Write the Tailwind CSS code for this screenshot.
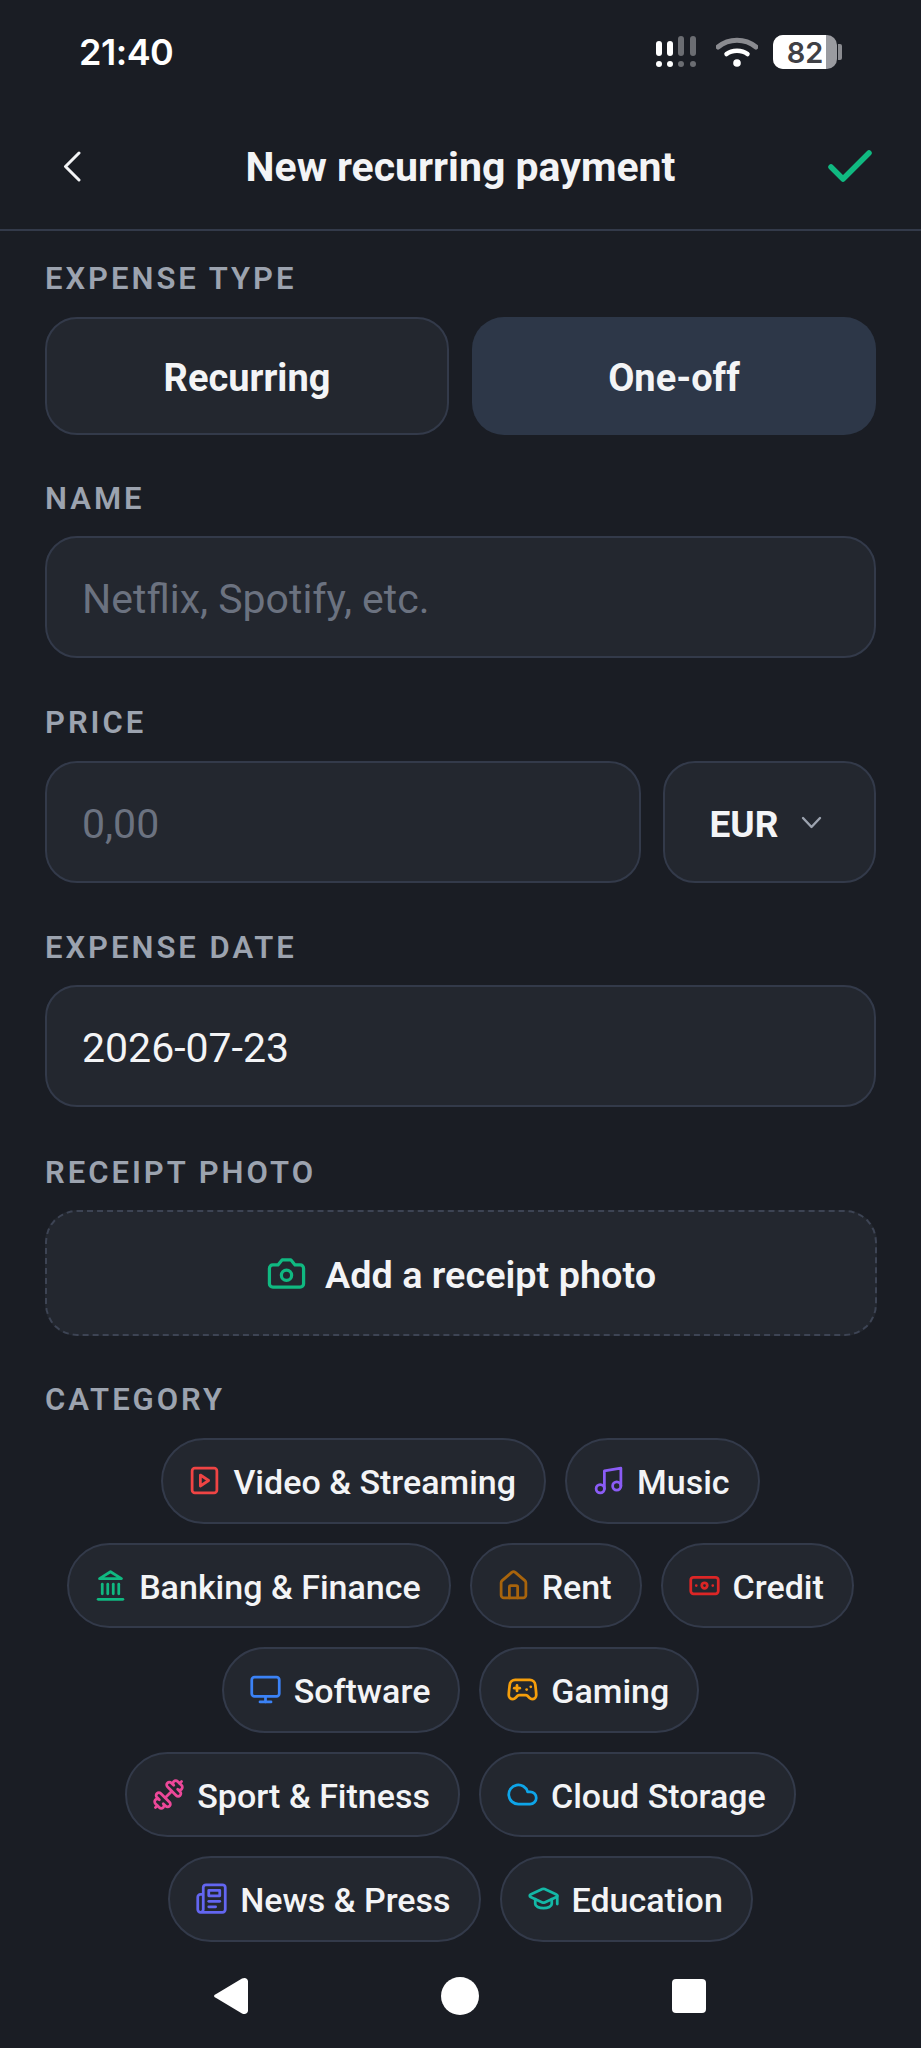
<!DOCTYPE html>
<html lang="en">
  <head>
    <meta charset="UTF-8" />
    <meta name="viewport" content="width=device-width, initial-scale=1.0" />
    <title>New recurring payment</title>
    <script src="https://cdn.jsdelivr.net/npm/@tailwindcss/browser@4"></script>
  </head>

  <body class="bg-[#1a1d24] m-0 font-['Roboto',sans-serif] text-[#f3f4f6]">
    <div class="h-[2048px] w-[921px] overflow-hidden flex flex-col">
      <!-- status bar -->
      <div class="h-[104px] pl-[79px] pr-[79px] flex items-center justify-between shrink-0">
        <span class="font-['Inter',sans-serif] font-semibold text-[36px] leading-none text-white tracking-[-0.5px]">21:40</span>
        <div class="flex items-center">
          <svg width="41" height="32" viewBox="0 0 41 32" class="mr-[19px]">
            <rect x="0" y="5" width="6" height="15" rx="3" fill="#fff" />
            <rect x="11" y="5" width="6" height="15" rx="3" fill="#fff" />
            <rect x="22" y="0" width="6" height="20" rx="3" fill="#6b6d72" />
            <rect x="34" y="0" width="6" height="20" rx="3" fill="#6b6d72" />
            <circle cx="3" cy="28" r="3" fill="#fff" />
            <circle cx="14" cy="28" r="3" fill="#fff" />
            <circle cx="25" cy="28" r="3" fill="#6b6d72" />
            <circle cx="37" cy="28" r="3" fill="#6b6d72" />
          </svg>
          <svg width="42" height="30" viewBox="0 0 42 30" fill="none" class="mr-[15px]">
            <path d="M2 10 C13 1 29 1 40 10" stroke="#8a8b90" stroke-width="5" stroke-linecap="round" />
            <path d="M10.5 17 C16 12.5 26 12.5 31.5 17" stroke="#fff" stroke-width="4.5" stroke-linecap="round" />
            <circle cx="21" cy="26" r="3.8" fill="#fff" />
          </svg>
          <div class="relative w-[64px] h-[34px] rounded-[10px] overflow-hidden bg-[#9a9ba0]">
            <div class="absolute left-0 top-0 bottom-0 w-[53px] bg-white"></div>
            <span class="absolute inset-0 flex items-center justify-center font-['Inter',sans-serif] font-semibold text-[29px] leading-none text-[#3f4045]">82</span>
          </div>
          <div class="w-[4px] h-[16px] ml-[1px] rounded-r-[2px] bg-[#8a8b90]"></div>
        </div>
      </div>

      <!-- header -->
      <div class="h-[127px] border-b-2 border-[#333a4a] px-[63px] flex items-center justify-between shrink-0 relative">
        <svg width="18" height="31" viewBox="0 0 18 31" fill="none">
          <path d="M16 2 2.5 15.5 16 29" stroke="#f3f4f6" stroke-width="3" stroke-linecap="round" stroke-linejoin="round" />
        </svg>
        <span class="absolute left-0 right-0 text-center font-bold text-[41px] leading-none pt-[2px]">New recurring payment</span>
        <svg width="44" height="32" viewBox="0 0 44 32" fill="none" class="-mr-[14px] -mt-[2px]">
          <path d="M3 17 15 29 41 3" stroke="#10b981" stroke-width="5.5" stroke-linecap="round" stroke-linejoin="round" />
        </svg>
      </div>

      <!-- form -->
      <div class="px-[45px] flex flex-col grow">
        <label class="mt-[34px] h-[27px] leading-[28px] text-[31px] font-semibold tracking-[3px] text-[#9ca3af]">EXPENSE TYPE</label>
        <div class="mt-[25px] flex gap-[23px]">
          <button class="w-[405px] h-[118px] pt-[5px] rounded-[32px] border-2 border-[#333a4a] bg-[#23272f] font-bold text-[38px]">Recurring</button>
          <button class="w-[405px] h-[118px] pt-[5px] rounded-[32px] bg-[#2d3748] font-bold text-[38px]">One-off</button>
        </div>

        <label class="mt-[50px] h-[27px] leading-[28px] text-[31px] font-semibold tracking-[3px] text-[#9ca3af]">NAME</label>
        <div class="mt-[24px] h-[122px] w-[831px] pt-[5px] rounded-[32px] border-2 border-[#333a4a] bg-[#23272f] px-[35px] flex items-center text-[41px] text-[#6b7280]">Netflix, Spotify, etc.</div>

        <label class="mt-[51px] h-[27px] leading-[28px] text-[31px] font-semibold tracking-[3px] text-[#9ca3af]">PRICE</label>
        <div class="mt-[25px] flex gap-[22px] w-[831px]">
          <div class="w-[596px] h-[122px] pt-[5px] rounded-[32px] border-2 border-[#333a4a] bg-[#23272f] px-[35px] flex items-center text-[41px] text-[#6b7280]">0,00</div>
          <div class="grow h-[122px] pr-[7px] rounded-[32px] border-2 border-[#333a4a] bg-[#23272f] flex items-center justify-center gap-[23px]">
            <span class="font-bold text-[37px] pt-[5px]">EUR</span>
            <svg width="21" height="13" viewBox="0 0 21 13" fill="none">
              <path d="M2 2 10.500 11 19 2" stroke="#9ca3af" stroke-width="2.400" stroke-linecap="round" stroke-linejoin="round" />
            </svg>
          </div>
        </div>

        <label class="mt-[51px] h-[27px] leading-[28px] text-[31px] font-semibold tracking-[3px] text-[#9ca3af]">EXPENSE DATE</label>
        <div class="mt-[24px] h-[122px] w-[831px] pt-[5px] rounded-[32px] border-2 border-[#333a4a] bg-[#23272f] px-[35px] flex items-center text-[41px] text-[#f3f4f6]">2026-07-23</div>

        <label class="mt-[52px] h-[27px] leading-[28px] text-[31px] font-semibold tracking-[3px] text-[#9ca3af]">RECEIPT PHOTO</label>
        <div class="mt-[24px] h-[126px] w-[832px] rounded-[32px] border-2 border-dashed border-[#3d4454] bg-[#23272f] flex items-center justify-center gap-[18px]">
          <svg width="41" height="41" viewBox="0 0 24 24" fill="none" stroke="#10b981" stroke-width="1.900" stroke-linecap="round" stroke-linejoin="round">
            <path d="M14.5 4h-5L7 7H4a2 2 0 0 0-2 2v9a2 2 0 0 0 2 2h16a2 2 0 0 0 2-2V9a2 2 0 0 0-2-2h-3l-2.5-3z" />
            <circle cx="12" cy="13" r="3" />
          </svg>
          <span class="font-semibold text-[37.8px] pt-[5px]">Add a receipt photo</span>
        </div>

        <label class="mt-[50px] h-[27px] leading-[28px] text-[31px] font-semibold tracking-[3px] text-[#9ca3af]">CATEGORY</label>

        <div class="mt-[25px] flex flex-wrap justify-center gap-x-[19px] gap-y-[19px] font-medium text-[34px]">
          <div class="h-[85.5px] pl-[25px] pr-[28px] rounded-full border-2 border-[#333a4a] bg-[#23272f] flex items-center gap-[12px]">
            <svg width="33" height="33" viewBox="0 0 24 24" fill="none" stroke="#ef4444" stroke-width="2" stroke-linecap="round" stroke-linejoin="round"><rect x="3" y="3" width="18" height="18" rx="2" /><path d="m9 8 6 4-6 4Z" /></svg>
            <span class="pt-[4px]">Video &amp; Streaming</span>
          </div>
          <div class="h-[85.5px] pl-[25px] pr-[28px] rounded-full border-2 border-[#333a4a] bg-[#23272f] flex items-center gap-[12px]">
            <svg width="33" height="33" viewBox="0 0 24 24" fill="none" stroke="#8b5cf6" stroke-width="2" stroke-linecap="round" stroke-linejoin="round"><path d="M9 18V5l12-2v13" /><circle cx="6" cy="18" r="3" /><circle cx="18" cy="16" r="3" /></svg>
            <span class="pt-[4px]">Music</span>
          </div>
          <div class="h-[85.5px] pl-[25px] pr-[28px] rounded-full border-2 border-[#333a4a] bg-[#23272f] flex items-center gap-[12px]">
            <svg width="33" height="33" viewBox="0 0 24 24" fill="none" stroke="#10b981" stroke-width="2" stroke-linecap="round" stroke-linejoin="round"><line x1="3" x2="21" y1="22" y2="22" /><line x1="6" x2="6" y1="18" y2="11" /><line x1="10" x2="10" y1="18" y2="11" /><line x1="14" x2="14" y1="18" y2="11" /><line x1="18" x2="18" y1="18" y2="11" /><polygon points="12 2 20 7 4 7" /></svg>
            <span class="pt-[4px]">Banking &amp; Finance</span>
          </div>
          <div class="h-[85.5px] pl-[25px] pr-[28px] rounded-full border-2 border-[#333a4a] bg-[#23272f] flex items-center gap-[12px]">
            <svg width="33" height="33" viewBox="0 0 24 24" fill="none" stroke="#a8640c" stroke-width="2" stroke-linecap="round" stroke-linejoin="round"><path d="M15 21v-8a1 1 0 0 0-1-1h-4a1 1 0 0 0-1 1v8" /><path d="M3 10a2 2 0 0 1 .709-1.528l7-5.999a2 2 0 0 1 2.582 0l7 5.999A2 2 0 0 1 21 10v9a2 2 0 0 1-2 2H5a2 2 0 0 1-2-2z" /></svg>
            <span class="pt-[4px]">Rent</span>
          </div>
          <div class="h-[85.5px] pl-[25px] pr-[28px] rounded-full border-2 border-[#333a4a] bg-[#23272f] flex items-center gap-[12px]">
            <svg width="33" height="33" viewBox="0 0 24 24" fill="none" stroke="#dc2626" stroke-width="2" stroke-linecap="round" stroke-linejoin="round"><rect width="20" height="12" x="2" y="6" rx="2" /><circle cx="12" cy="12" r="2" /><path d="M6 12h.01M18 12h.01" /></svg>
            <span class="pt-[4px]">Credit</span>
          </div>
          <div class="h-[85.5px] pl-[25px] pr-[28px] rounded-full border-2 border-[#333a4a] bg-[#23272f] flex items-center gap-[12px]">
            <svg width="33" height="33" viewBox="0 0 24 24" fill="none" stroke="#3b82f6" stroke-width="2" stroke-linecap="round" stroke-linejoin="round"><rect width="20" height="14" x="2" y="3" rx="2" /><line x1="8" x2="16" y1="21" y2="21" /><line x1="12" x2="12" y1="17" y2="21" /></svg>
            <span class="pt-[4px]">Software</span>
          </div>
          <div class="h-[85.5px] pl-[25px] pr-[28px] rounded-full border-2 border-[#333a4a] bg-[#23272f] flex items-center gap-[12px]">
            <svg width="33" height="33" viewBox="0 0 24 24" fill="none" stroke="#f59e0b" stroke-width="2" stroke-linecap="round" stroke-linejoin="round"><line x1="6" x2="10" y1="11" y2="11" /><line x1="8" x2="8" y1="9" y2="13" /><line x1="15" x2="15.01" y1="12" y2="12" /><line x1="18" x2="18.01" y1="10" y2="10" /><path d="M17.32 5H6.68a4 4 0 0 0-3.978 3.59c-.006.052-.01.101-.017.152C2.604 9.416 2 14.456 2 16a3 3 0 0 0 3 3c1 0 1.5-.5 2-1l1.414-1.414A2 2 0 0 1 9.828 16h4.344a2 2 0 0 1 1.414.586L17 18c.5.5 1 1 2 1a3 3 0 0 0 3-3c0-1.545-.604-6.584-.685-7.258-.007-.05-.011-.1-.017-.151A4 4 0 0 0 17.32 5z" /></svg>
            <span class="pt-[4px]">Gaming</span>
          </div>
          <div class="h-[85.5px] pl-[25px] pr-[28px] rounded-full border-2 border-[#333a4a] bg-[#23272f] flex items-center gap-[12px]">
            <svg width="33" height="33" viewBox="0 0 24 24" fill="none" stroke="#ec4899" stroke-width="2" stroke-linecap="round" stroke-linejoin="round" class="-scale-x-100"><path d="M14.4 14.4 9.6 9.6" /><path d="M18.657 21.485a2 2 0 1 1-2.829-2.828l-1.767 1.768a2 2 0 1 1-2.829-2.829l6.364-6.364a2 2 0 1 1 2.829 2.829l-1.768 1.767a2 2 0 1 1 2.828 2.829z" /><path d="m21.5 21.5-1.4-1.4" /><path d="M3.9 3.9 2.5 2.5" /><path d="M6.404 12.768a2 2 0 1 1-2.829-2.829l1.768-1.767a2 2 0 1 1-2.828-2.829l2.828-2.828a2 2 0 1 1 2.829 2.828l1.767-1.768a2 2 0 1 1 2.829 2.829z" /></svg>
            <span class="pt-[4px]">Sport &amp; Fitness</span>
          </div>
          <div class="h-[85.5px] pl-[25px] pr-[28px] rounded-full border-2 border-[#333a4a] bg-[#23272f] flex items-center gap-[12px]">
            <svg width="33" height="33" viewBox="0 0 24 24" fill="none" stroke="#0ea5e9" stroke-width="2" stroke-linecap="round" stroke-linejoin="round"><path d="M17.5 19H9a7 7 0 1 1 6.71-9h1.79a4.5 4.5 0 1 1 0 9Z" /></svg>
            <span class="pt-[4px]">Cloud Storage</span>
          </div>
          <div class="h-[85.5px] pl-[25px] pr-[28px] rounded-full border-2 border-[#333a4a] bg-[#23272f] flex items-center gap-[12px]">
            <svg width="33" height="33" viewBox="0 0 24 24" fill="none" stroke="#6366f1" stroke-width="2" stroke-linecap="round" stroke-linejoin="round"><path d="M4 22h16a2 2 0 0 0 2-2V4a2 2 0 0 0-2-2H8a2 2 0 0 0-2 2v16a2 2 0 0 1-2 2Zm0 0a2 2 0 0 1-2-2v-9c0-1.1.9-2 2-2h2" /><path d="M18 14h-8" /><path d="M15 18h-5" /><path d="M10 6h8v4h-8V6Z" /></svg>
            <span class="pt-[4px]">News &amp; Press</span>
          </div>
          <div class="h-[85.5px] pl-[25px] pr-[28px] rounded-full border-2 border-[#333a4a] bg-[#23272f] flex items-center gap-[12px]">
            <svg width="33" height="33" viewBox="0 0 24 24" fill="none" stroke="#14b8a6" stroke-width="2" stroke-linecap="round" stroke-linejoin="round"><path d="M21.42 10.922a1 1 0 0 0-.019-1.838L12.83 5.18a2 2 0 0 0-1.66 0L2.6 9.08a1 1 0 0 0 0 1.832l8.57 3.908a2 2 0 0 0 1.66 0z" /><path d="M22 10v6" /><path d="M6 12.5V16a6 3 0 0 0 12 0v-3.5" /></svg>
            <span class="pt-[4px]">Education</span>
          </div>
        </div>
      </div>

      <!-- android nav -->
      <div class="h-[108px] shrink-0 flex items-center justify-between pl-[214px] pr-[215px]">
        <svg width="34" height="38" viewBox="0 0 34 38"><path d="M3 16.5 28 1.500C31 0 34 1.500 34 4.500V33.500C34 36.500 31 38 28 36.500L3 21.500C-1 19.500 -1 18.500 3 16.500Z" fill="#fff" /></svg>
        <div class="w-[38px] h-[38px] rounded-full bg-white"></div>
        <div class="w-[34px] h-[34px] rounded-[4px] bg-white"></div>
      </div>
    </div>
  </body>
</html>
